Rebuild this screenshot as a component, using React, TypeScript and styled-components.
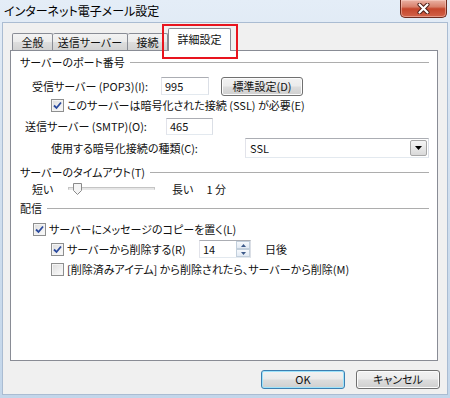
import React from 'react';
import styled, { createGlobalStyle } from 'styled-components';

const GlobalStyle = createGlobalStyle`
  html, body {
    margin: 0;
    padding: 0;
  }
  body {
    width: 450px;
    height: 398px;
    overflow: hidden;
    font-family: "Noto Sans CJK JP", "Noto Sans", sans-serif;
    font-size: 11px;
    font-feature-settings: "palt";
    color: #111;
  }
`;

const Window = styled.div`
  position: relative;
  width: 450px;
  height: 398px;
  display: flex;
  flex-direction: column;
  background: linear-gradient(180deg, #e4edf7 0%, #d5e2f0 35%, #c3d6ea 100%);
`;

const TitleBar = styled.div`
  height: 23px;
  flex-shrink: 0;
  display: flex;
  align-items: flex-start;
  justify-content: space-between;
`;

const Title = styled.div`
  padding: 3px 0 0 4px;
  line-height: 16px;
  font-size: 12px;
  color: #000;
`;

const CloseButton = styled.div`
  width: 47px;
  height: 18px;
  margin-right: 3px;
  box-sizing: border-box;
  border: 1px solid #6e2c20;
  border-top: none;
  border-radius: 0 0 5px 5px;
  background: linear-gradient(180deg, #eab2a4 0%, #d8806b 40%, #c5462c 52%, #d2634a 100%);
  box-shadow: inset 0 0 0 1px rgba(255, 220, 210, 0.45);
  display: flex;
  align-items: center;
  justify-content: center;
`;

const Client = styled.div`
  flex: 1;
  margin: 0 3px 4px 3px;
  background: #f0f0f0;
  padding: 5px 9px 0 7px;
  display: flex;
  flex-direction: column;
  box-shadow: 0 0 0 1px #aabcd2;
`;

const TabStrip = styled.div`
  height: 22px;
  display: flex;
  align-items: flex-end;
  padding-left: 2px;
`;

const Tab = styled.div<{ $w: number; $active?: boolean }>`
  position: relative;
  z-index: ${(p) => (p.$active ? 2 : 1)};
  width: ${(p) => p.$w}px;
  height: ${(p) => (p.$active ? 23 : 17)}px;
  margin-bottom: ${(p) => (p.$active ? -1 : 0)}px;
  box-sizing: border-box;
  border: 1px solid #898c95;
  border-bottom: none;
  border-left-width: ${(p) => (p.$active ? 1 : 0)}px;
  border-radius: 2px 2px 0 0;
  background: ${(p) =>
    p.$active
      ? '#fff'
      : 'linear-gradient(180deg, #f3f3f3 0%, #ebebeb 50%, #dedede 51%, #d2d2d2 100%)'};
  display: flex;
  align-items: ${(p) => (p.$active ? 'flex-start' : 'center')};
  justify-content: center;
  padding-top: ${(p) => (p.$active ? 3 : 0)}px;
  line-height: 15px;

  &:first-child {
    border-left-width: 1px;
  }
`;

const Highlight = styled.div`
  position: absolute;
  left: 162px;
  top: 24px;
  width: 76px;
  height: 35px;
  box-sizing: border-box;
  border: 2px solid #e8141e;
  z-index: 5;
  pointer-events: none;
`;

const Panel = styled.div`
  position: relative;
  height: 311px;
  box-sizing: border-box;
  border: 1px solid #898c95;
  background: #fff;
  padding: 3px 8px 0 9px;
  display: flex;
  flex-direction: column;
`;

const GroupHeader = styled.div<{ $mt?: number }>`
  height: 16px;
  margin-top: ${(p) => p.$mt ?? 0}px;
  display: flex;
  align-items: center;
  line-height: 16px;

  &::after {
    content: '';
    flex: 1;
    height: 1px;
    margin-left: 5px;
    background: #adadad;
  }
`;

const Row = styled.div<{ $h: number; $mt?: number; $indent?: number }>`
  height: ${(p) => p.$h}px;
  margin-top: ${(p) => p.$mt ?? 0}px;
  padding-left: ${(p) => p.$indent ?? 0}px;
  display: flex;
  align-items: center;
  white-space: nowrap;
`;

const Label = styled.span<{ $w?: number; $ml?: number }>`
  width: ${(p) => (p.$w ? `${p.$w}px` : 'auto')};
  margin-left: ${(p) => p.$ml ?? 0}px;
  flex-shrink: 0;
  line-height: 16px;
`;

const TextBox = styled.div<{ $w: number; $h: number }>`
  width: ${(p) => p.$w}px;
  height: ${(p) => p.$h}px;
  flex-shrink: 0;
  box-sizing: border-box;
  border: 1px solid;
  border-color: #abadb3 #dbdfe6 #e3e9ef #e2e3ea;
  background: #fff;
  padding-left: 3px;
  display: flex;
  align-items: center;
  line-height: 14px;
`;

const PushButton = styled.div<{ $w: number; $ml?: number; $focused?: boolean }>`
  width: ${(p) => p.$w}px;
  height: 19px;
  margin-left: ${(p) => p.$ml ?? 0}px;
  flex-shrink: 0;
  box-sizing: border-box;
  border: 1px solid ${(p) => (p.$focused ? '#3c7fb1' : '#707070')};
  border-radius: 3px;
  background: linear-gradient(180deg, #f2f2f2 0%, #ebebeb 48%, #dddddd 52%, #cfcfcf 100%);
  box-shadow: inset 0 0 0 1px ${(p) => (p.$focused ? '#9ee3fb' : '#fcfcfc')};
  display: flex;
  align-items: center;
  justify-content: center;
  line-height: 15px;
`;

const Select = styled.div`
  width: 184px;
  height: 20px;
  flex-shrink: 0;
  box-sizing: border-box;
  border: 1px solid;
  border-color: #abadb3 #dbdfe6 #e3e9ef #e2e3ea;
  background: #fff;
  display: flex;
  align-items: center;
  justify-content: space-between;
  padding: 0 1px 0 4px;
`;

const DropButton = styled.div`
  width: 17px;
  height: 16px;
  box-sizing: border-box;
  border: 1px solid #a7a7a7;
  border-radius: 2px;
  background: linear-gradient(180deg, #f5f5f5 0%, #e8e8e8 50%, #d9d9d9 100%);
  display: flex;
  align-items: center;
  justify-content: center;
`;

const CheckRow = styled.span<{ $w?: number }>`
  width: ${(p) => (p.$w ? `${p.$w}px` : 'auto')};
  flex-shrink: 0;
  display: flex;
  align-items: center;
  gap: 3px;
`;

const Box = styled.span`
  width: 13px;
  height: 13px;
  box-sizing: border-box;
  border: 1px solid #8e8f8f;
  background: linear-gradient(135deg, #dcdcdc 0%, #f0f0f0 60%, #fbfbfb 100%);
  box-shadow: inset 0 0 0 1px #f4f4f4;
  display: flex;
  align-items: center;
  justify-content: center;
  flex-shrink: 0;
`;

const SliderTrack = styled.div`
  position: relative;
  width: 87px;
  height: 18px;
  flex-shrink: 0;

  &::before {
    content: '';
    position: absolute;
    left: 0;
    right: 0;
    top: 7px;
    height: 3px;
    box-sizing: border-box;
    border: 1px solid #c4c4c4;
    border-bottom-color: #e8e8e8;
    background: #e6e6e6;
  }
`;

const Thumb = styled.svg`
  position: absolute;
  left: 5px;
  top: 3px;
`;

const Spinner = styled.div`
  width: 52px;
  height: 18px;
  flex-shrink: 0;
  box-sizing: border-box;
  border: 1px solid;
  border-color: #abadb3 #dbdfe6 #e3e9ef #e2e3ea;
  background: #fff;
  display: flex;
  align-items: center;
  justify-content: space-between;
  padding-left: 3px;
`;

const SpinButtons = styled.div`
  width: 14px;
  height: 16px;
  display: flex;
  flex-direction: column;
`;

const SpinHalf = styled.div`
  flex: 1;
  box-sizing: border-box;
  border: 1px solid #c2cfdc;
  background: linear-gradient(180deg, #f6f9fc 0%, #e2eaf3 100%);
  display: flex;
  align-items: center;
  justify-content: center;
`;

const Footer = styled.div`
  display: flex;
  justify-content: flex-end;
  gap: 11px;
  padding-top: 9px;
  margin-right: -2px;
`;

const Check: React.FC<{ checked?: boolean; w?: number; children: React.ReactNode }> = ({
  checked,
  w,
  children,
}) => (
  <CheckRow $w={w}>
    <Box>
      {checked && (
        <svg width="9" height="9" viewBox="0 0 9 9">
          <path d="M1 4.5 L3.5 7 L8 1.5" fill="none" stroke="#2a4a9e" strokeWidth="1.8" />
        </svg>
      )}
    </Box>
    <span>{children}</span>
  </CheckRow>
);

const App: React.FC = () => {
  return (
    <Window>
      <GlobalStyle />
      <TitleBar>
        <Title>インターネット電子メール設定</Title>
        <CloseButton>
          <svg width="13" height="11" viewBox="0 0 13 11">
            <path d="M2.5 1.5 L10.5 9.5 M10.5 1.5 L2.5 9.5" stroke="#4a1a12" strokeWidth="4" strokeLinecap="round" />
            <path d="M2.5 1.5 L10.5 9.5 M10.5 1.5 L2.5 9.5" stroke="#fff" strokeWidth="2.2" strokeLinecap="round" />
          </svg>
        </CloseButton>
      </TitleBar>
      <Client>
        <TabStrip>
          <Tab $w={41}>全般</Tab>
          <Tab $w={75}>送信サーバー</Tab>
          <Tab $w={40}>接続</Tab>
          <Tab $w={63} $active>
            詳細設定
          </Tab>
        </TabStrip>
        <Panel>
          <GroupHeader>サーバーのポート番号</GroupHeader>
          <Row $h={20} $mt={6} $indent={12}>
            <Label $w={129}>受信サーバー (POP3)(I):</Label>
            <TextBox $w={48} $h={18}>995</TextBox>
            <PushButton $w={82} $ml={12}>
              標準設定(D)
            </PushButton>
          </Row>
          <Row $h={18} $indent={31}>
            <Check checked>このサーバーは暗号化された接続 (SSL) が必要(E)</Check>
          </Row>
          <Row $h={20} $mt={2} $indent={5}>
            <Label $w={141}>送信サーバー (SMTP)(O):</Label>
            <TextBox $w={47} $h={17}>465</TextBox>
          </Row>
          <Row $h={20} $mt={2} $indent={31}>
            <Label $w={194}>使用する暗号化接続の種類(C):</Label>
            <Select>
              <span>SSL</span>
              <DropButton>
                <svg width="7" height="4" viewBox="0 0 7 4">
                  <path d="M0 0 H7 L3.5 4 Z" fill="#000" />
                </svg>
              </DropButton>
            </Select>
          </Row>

          <GroupHeader $mt={6}>サーバーのタイムアウト(T)</GroupHeader>
          <Row $h={18} $indent={12}>
            <Label $w={36}>短い</Label>
            <SliderTrack>
              <Thumb width="9" height="12" viewBox="0 0 9 12">
                <path
                  d="M0.5 0.5 H8.5 V7.5 L4.5 11.5 L0.5 7.5 Z"
                  fill="#f4f4f4"
                  stroke="#8a8a8a"
                  strokeWidth="1"
                />
              </Thumb>
            </SliderTrack>
            <Label $ml={17}>長い</Label>
            <Label $ml={13}>1 分</Label>
          </Row>

          <GroupHeader $mt={2}>配信</GroupHeader>
          <Row $h={18} $mt={4} $indent={13}>
            <Check checked>サーバーにメッセージのコピーを置く(L)</Check>
          </Row>
          <Row $h={18} $mt={2} $indent={31}>
            <Check checked w={148}>
              サーバーから削除する(R)
            </Check>
            <Spinner>
              <span>14</span>
              <SpinButtons>
                <SpinHalf>
                  <svg width="5" height="3" viewBox="0 0 5 3">
                    <path d="M0 3 L2.5 0 L5 3 Z" fill="#3d5a8a" />
                  </svg>
                </SpinHalf>
                <SpinHalf>
                  <svg width="5" height="3" viewBox="0 0 5 3">
                    <path d="M0 0 L2.5 3 L5 0 Z" fill="#3d5a8a" />
                  </svg>
                </SpinHalf>
              </SpinButtons>
            </Spinner>
            <Label $ml={14}>日後</Label>
          </Row>
          <Row $h={18} $mt={2} $indent={31}>
            <Check>[削除済みアイテム] から削除されたら、サーバーから削除(M)</Check>
          </Row>
        </Panel>
        <Footer>
          <PushButton $w={84} $focused>
            OK
          </PushButton>
          <PushButton $w={84}>キャンセル</PushButton>
        </Footer>
      </Client>
      <Highlight />
    </Window>
  );
};

export default App;
